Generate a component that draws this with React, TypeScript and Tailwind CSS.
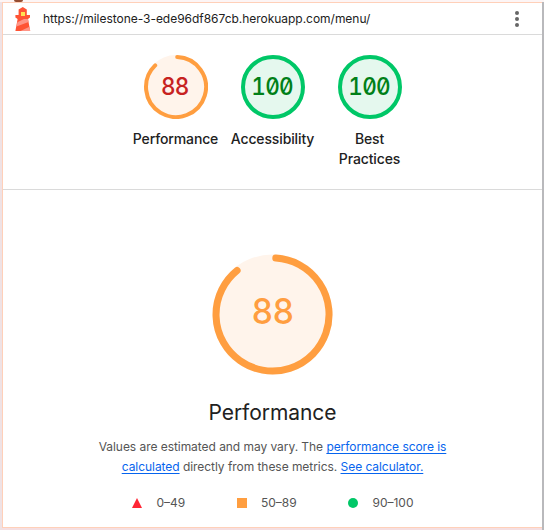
type GaugeProps = { score: number; label: string[]; tone: 'average' | 'pass' };

function Lighthouse() {
  return (
    <svg className="h-6 w-4 shrink-0" viewBox="0 0 16 24">
      <path d="M7.800 0 11.800 2.500V8H15v2.500L13 12l2.200 12H.4l2.200-12L.4 10.500V8h3.200V2.500z" fill="#ff5334" />
      <path d="M2.400 15.200 9 12h4l.6 3L1.500 19.500zM5.500 24l9-4.200.7 4.200z" fill="#ff9587" />
      <path d="M6 5h4v4H6z" fill="#ffe052" />
    </svg>
  );
}

function Gauge({ score, label, tone }: GaugeProps) {
  const pass = tone === 'pass';
  return (
    <div className="flex w-[97px] flex-col items-center">
      <div className="grid size-16 place-items-center">
        <svg className="col-start-1 row-start-1 size-16" viewBox="0 0 64 64">
          <circle cx="32" cy="32" r="32" fill={pass ? '#e5f8ee' : '#fff4eb'} />
          {pass ? (
            <circle cx="32" cy="32" r="30" fill="none" stroke="#00c767" strokeWidth="4" />
          ) : (
            <path d="M33.2 2A30 30 0 1 1 11.2 10.4" fill="none" stroke="#ff9e40" strokeWidth="4" strokeLinecap="round" />
          )}
        </svg>
        <span
          className={`col-start-1 row-start-1 mr-px scale-x-[0.94] text-2xl leading-none tracking-[-0.8px] font-medium [font-feature-settings:'tnum','zero'] ${pass ? 'text-[#008018]' : 'text-[#c7221f]'}`}
        >
          {score}
        </span>
      </div>
      <div className="mt-[10px] text-center text-[14px] leading-5 font-medium tracking-[-0.13px] text-[#212121]">
        {label.map((line) => (
          <span key={line} className="block">
            {line}
          </span>
        ))}
      </div>
    </div>
  );
}

const link = 'text-[#0664ee] underline underline-offset-[1.5px]';

export default function App() {
  return (
    <div className="flex h-[530px] w-[544px] flex-col overflow-hidden bg-white font-['Inter','Liberation_Sans',sans-serif]">
      <div className="h-[2px] shrink-0 bg-[#fdf5f5]">
        <div className="ml-[14px] h-[2px] w-[9px] rounded-b-full bg-[#954d32]" />
      </div>
      <div className="flex min-h-0 flex-1 border-r-2 border-l-2 border-r-[#b9b9bc] border-l-[#efe2e5]">
        <div className="flex flex-1 flex-col border-t border-l border-[#ffd0b9]">
          <header className="flex h-8 shrink-0 items-center border-b border-[#dadada] pr-[23px] pl-3">
            <Lighthouse />
            <span className="ml-3 text-[12px] tracking-[-0.03px] whitespace-nowrap text-[#212121]">
              https://milestone-3-ede96df867cb.herokuapp.com/menu/
            </span>
            <span className="ml-auto flex flex-col gap-[2px]">
              <i className="size-1 rounded-full bg-[#666]" />
              <i className="size-1 rounded-full bg-[#666]" />
              <i className="size-1 rounded-full bg-[#666]" />
            </span>
          </header>
          <section className="flex h-[155px] shrink-0 justify-center border-b border-[#dadada] pt-5">
            <Gauge score={88} label={['Performance']} tone="average" />
            <Gauge score={100} label={['Accessibility']} tone="pass" />
            <Gauge score={100} label={['Best', 'Practices']} tone="pass" />
          </section>
          <main className="flex flex-1 flex-col items-center pt-[64px]">
            <div className="grid size-[121px] place-items-center">
              <svg className="col-start-1 row-start-1 size-[121px]" viewBox="0 0 121 121">
                <circle cx="60.5" cy="60.5" r="60" fill="#fff4eb" />
                <path d="M63.8 4.1A56.500 56.500 0 1 1 25.1 16.500" fill="none" stroke="#ff9e40" strokeWidth="7" strokeLinecap="round" />
              </svg>
              <span className="col-start-1 row-start-1 mb-[7px] scale-x-[0.93] text-[36px] leading-none tracking-[-0.8px] font-medium text-[#ff9e40] [font-feature-settings:'tnum','zero']">
                88
              </span>
            </div>
            <h1 className="mt-[24px] text-[21px] leading-7 tracking-[-0.05px] text-[#212121]">Performance</h1>
            <p className="mt-[10px] text-center text-[12px] leading-5 tracking-[-0.05px] whitespace-nowrap text-[#555]">
              Values are estimated and may vary. The <span className={link}>performance score is</span>
              <br />
              <span className={link}>calculated</span> directly from these metrics. <span className={link}>See calculator.</span>
            </p>
            <div className="mt-4 flex h-5 w-[282px] items-center justify-between text-[12px] text-[#555]">
              <span className="flex items-center gap-[15px]">
                <svg className="size-[10px]" viewBox="0 0 10 10"><path d="M5 0 10 10H0z" fill="#ff2635" /></svg>
                0–49
              </span>
              <span className="flex items-center gap-[14px]">
                <i className="size-[10px] bg-[#ff9e40]" />
                50–89
              </span>
              <span className="flex items-center gap-[14px]">
                <i className="size-[10px] rounded-full bg-[#00c767]" />
                90–100
              </span>
            </div>
          </main>
        </div>
      </div>
      <div className="flex h-[3px] shrink-0 border-r-2 border-l-2 border-r-[#b9b9bc] border-l-[#efe2e5] bg-[#f5dfe2]">
        <div className="h-px flex-1 bg-[#ffd0b9]" />
      </div>
    </div>
  );
}
